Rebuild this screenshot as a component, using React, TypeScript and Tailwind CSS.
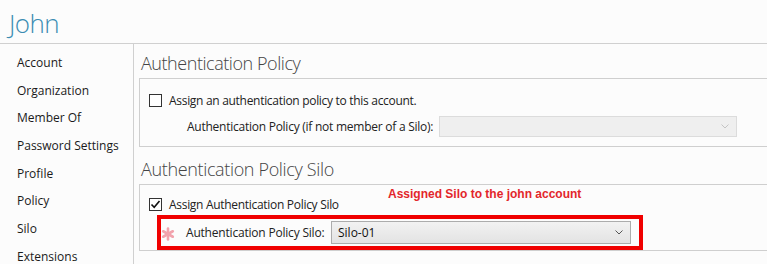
import React from "react";

const font = { fontFamily: '"Open Sans", "Noto Sans", sans-serif' };

function Chevron({ color }: { color: string }) {
  return (
    <svg width="8" height="5" viewBox="0 0 8 5" className="shrink-0">
      <path d="M0.5 0.5 L4 4 L7.5 0.5" fill="none" stroke={color} strokeWidth="1" />
    </svg>
  );
}

function Checkbox({ checked }: { checked?: boolean }) {
  return (
    <div className="w-[13px] h-[13px] border border-[#333] bg-white flex items-center justify-center shrink-0">
      {checked && (
        <svg width="11" height="11" viewBox="0 0 11 11">
          <path d="M1.5 5.5 L4.2 8.3 L9.5 2" fill="none" stroke="#111" strokeWidth="1.6" />
        </svg>
      )}
    </div>
  );
}

function Asterisk() {
  return (
    <svg width="14" height="14" viewBox="-7 -7 14 14" className="shrink-0">
      <g stroke="#f2a3ad" strokeWidth="2.6" strokeLinecap="round">
        <line x1="0" y1="-5.5" x2="0" y2="5.5" />
        <line x1="-4.8" y1="-2.75" x2="4.8" y2="2.75" />
        <line x1="-4.8" y1="2.75" x2="4.8" y2="-2.75" />
      </g>
    </svg>
  );
}

export default function App() {
  const nav = [
    "Account",
    "Organization",
    "Member Of",
    "Password Settings",
    "Profile",
    "Policy",
    "Silo",
    "Extensions",
  ];
  return (
    <div
      className="w-[767px] h-[264px] overflow-hidden bg-[#fcfcfc] text-[#222] relative"
      style={font}
    >
      <div className="h-[44px] border-b border-[#d0d0d0] pl-[9px] pt-[7px]">
        <div className="text-[26px] font-light leading-[32px] text-[#3b8cb3] tracking-[-0.6px]">
          John
        </div>
      </div>
      <div className="flex h-[220px]">
        <div className="w-[134px] border-r border-[#d0d0d0] shrink-0 pl-[17px] pt-[10px]">
          {nav.map((n) => (
            <div key={n} className="h-[27.7px] text-[12px] leading-[18px] text-[#1a1a1a] whitespace-nowrap">
              {n}
            </div>
          ))}
        </div>
        <div className="flex-1 pl-[5px]">
          <div className="h-[34px] pl-[2px] pt-[8px] text-[18px] font-light leading-[23px] text-[#444] whitespace-nowrap tracking-[-0.45px]">
            Authentication Policy
          </div>
          <div className="border-t border-l border-b border-[#cfcfcf] pt-[15px] pb-[9px] pl-[9px]">
            <div className="flex items-center h-[13px]">
              <Checkbox />
              <span className="ml-[7px] text-[12px] leading-[16px] text-[#222] whitespace-nowrap tracking-[-0.3px]">
                Assign an authentication policy to this account.
              </span>
            </div>
            <div className="flex items-center h-[21px] mt-[9px]">
              <span className="ml-[38px] w-[252px] text-[12px] leading-[16px] text-[#222] whitespace-nowrap tracking-[-0.25px]">
                Authentication Policy (if not member of a Silo):
              </span>
              <div className="w-[298px] h-[21px] bg-[#efefef] border border-[#dcdcdc] flex items-center justify-end pr-[7px]">
                <Chevron color="#c4c4c4" />
              </div>
            </div>
          </div>
          <div className="h-[37px] pl-[2px] pt-[11px] text-[18px] font-light leading-[23px] text-[#444] whitespace-nowrap tracking-[-0.35px]">
            Authentication Policy Silo
          </div>
          <div className="border-t border-l border-b border-[#cfcfcf] pt-[13px] pl-[9px] relative">
            <div className="flex items-center h-[13px]">
              <Checkbox checked />
              <span className="ml-[7px] text-[12px] leading-[16px] text-[#222] whitespace-nowrap tracking-[-0.3px]">
                Assign Authentication Policy Silo
              </span>
            </div>
            <div className="mt-[4px] ml-[8px] w-[486px] h-[35px] border-[4px] border-[#f00000] flex items-center">
              <div className="ml-[0px] mt-[2px]">
                <Asterisk />
              </div>
              <span className="ml-[11px] w-[145px] text-[12px] leading-[16px] text-[#222] whitespace-nowrap tracking-[-0.2px]">
                Authentication Policy Silo:
              </span>
              <div className="w-[300px] h-[23px] border border-[#acacac] bg-gradient-to-b from-[#f2f2f2] to-[#e3e3e3] flex items-center pl-[6px] pr-[7px]">
                <span className="flex-1 text-[12px] leading-[16px] text-[#111]">Silo-01</span>
                <Chevron color="#555" />
              </div>
            </div>
          </div>
        </div>
      </div>
      <div
        className="absolute left-[388px] top-[187px] text-[12px] font-bold leading-[15px] text-[#e3262b] whitespace-nowrap"
        style={{ fontFamily: '"Liberation Sans", Arial, sans-serif' }}
      >
        Assigned Silo to the john account
      </div>
    </div>
  );
}
